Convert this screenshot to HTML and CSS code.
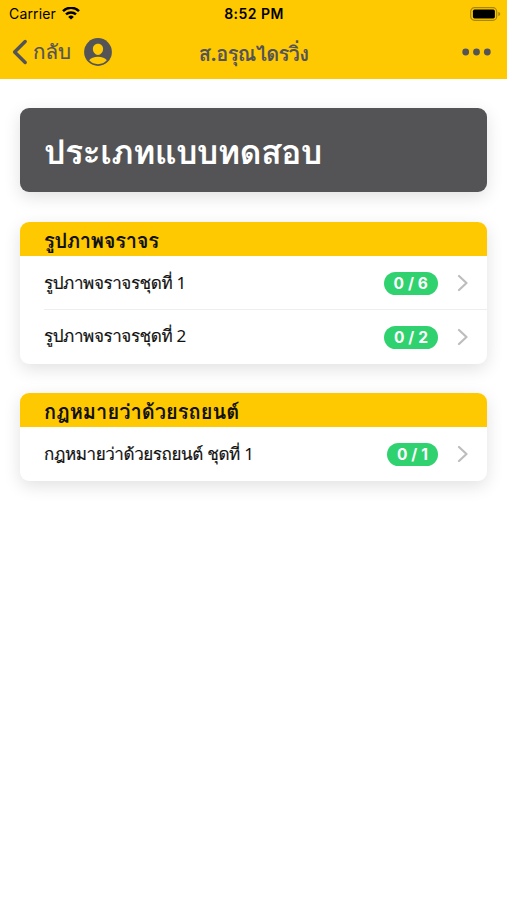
FILE: index.html
```html
<!DOCTYPE html>
<html lang="th">
<head>
<meta charset="utf-8">
<title>ส.อรุณไดรวิ่ง</title>
<link rel="stylesheet" href="styles.css">
</head>
<body>
<header class="top">
  <div class="status">
    <div class="carrier"><span>Carrier</span>
      <svg width="18" height="14" viewBox="0 0 18 14" fill="none" stroke="#000" stroke-width="2.5"><path d="M1 4.100a11.400 11.400 0 0 1 16 0M4 7.400a7.200 7.200 0 0 1 10 0"/><path d="M9 12.600L6.200 9.900a4 4 0 0 1 5.600 0z" fill="#000" stroke="none"/></svg>
    </div>
    <span class="time">8:52 PM</span>
    <svg class="battery" width="31" height="14" viewBox="0 0 31 14"><rect x=".7" y=".7" width="26" height="12.6" rx="3.8" fill="none" stroke="#a88608" stroke-width="1.2"/><rect x="2.9" y="2.600" width="22" height="8.800" rx="1.600" fill="#000"/><path d="M28.300 4.800q2 .8 2 2.200t-2 2.200z" fill="#a88608"/></svg>
  </div>
  <nav class="nav">
    <div class="left">
      <svg width="16" height="28" viewBox="0 0 16 28" fill="none" stroke="#545456" stroke-width="3.4" stroke-linecap="round" stroke-linejoin="round"><path d="M13.200 3.500L2.600 14l10.600 10.500"/></svg>
      <span class="back">กลับ</span>
      <svg class="user" width="28" height="28" viewBox="0 0 28 28"><circle cx="14" cy="14" r="13.9" fill="#545456"/><path d="M14 5.800c3 0 5.100 2.200 5.100 5.100S16.800 16.900 14 16.900 8.900 13.800 8.900 10.900 11 5.800 14 5.800zM5.200 22.300c1.400-2.300 5-3.500 8.800-3.500s7.400 1.200 8.800 3.500a12 12 0 0 1-17.600 0z" fill="#ffc902"/></svg>
    </div>
    <h1 class="nav-title">ส.อรุณไดรวิ่ง</h1>
    <svg class="more" width="29" height="8" viewBox="0 0 29 8" fill="#545456"><circle cx="3.700" cy="4" r="3.400"/><circle cx="14.500" cy="4" r="3.400"/><circle cx="25.300" cy="4" r="3.400"/></svg>
  </nav>
</header>
<main class="content">
  <section class="card banner"><h2>ประเภทแบบทดสอบ</h2></section>
  <section class="card">
    <h3 class="head">รูปภาพจราจร</h3>
    <div class="row divided"><span class="label">รูปภาพจราจรชุดที่ <span class="digit">1</span></span><span class="badge">0 / 6</span><svg class="chevron" width="11" height="18" viewBox="0 0 11 18"><path d="M2 2l7.500 7-7.500 7"/></svg></div>
    <div class="row last"><span class="label">รูปภาพจราจรชุดที่ <span class="digit">2</span></span><span class="badge">0 / 2</span><svg class="chevron" width="11" height="18" viewBox="0 0 11 18"><path d="M2 2l7.500 7-7.500 7"/></svg></div>
  </section>
  <section class="card">
    <h3 class="head long">กฎหมายว่าด้วยรถยนต์</h3>
    <div class="row"><span class="label">กฎหมายว่าด้วยรถยนต์ ชุดที่ <span class="digit">1</span></span><span class="badge">0 / 1</span><svg class="chevron" width="11" height="18" viewBox="0 0 11 18"><path d="M2 2l7.500 7-7.500 7"/></svg></div>
  </section>
</main>
</body>
</html>
```
FILE: styles.css
```css
* { box-sizing: border-box; }
body { margin: 0; background: #fff; color: #111; font-family: Inter, Loma, sans-serif; }
h1, h2, h3 { margin: 0; }
svg { display: block; flex: none; }
.top { height: 79px; background: #ffc902; }
.status { display: grid; grid-template-columns: 1fr auto 1fr; align-items: center; height: 27px; padding: 0 6px 0 9px; color: #000; }
.carrier { display: flex; align-items: center; gap: 6px; font-size: 14px; letter-spacing: .15px; }
.time { margin-right: 2px; font-size: 14px; font-weight: 600; letter-spacing: .45px; }
.battery { justify-self: end; }
.nav { display: grid; grid-template-columns: 1fr auto 1fr; align-items: center; height: 50px; padding: 0 16px 0 12px; color: #545456; }
.left { display: flex; align-items: center; }
.back { margin-left: 5px; font-size: 20.500px; line-height: 28px; -webkit-text-stroke: .2px; }
.user { margin-left: 13px; }
.nav-title { padding: 4px 0 0 4px; font-size: 20px; line-height: 28px; letter-spacing: -.65px; }
.more { justify-self: end; }
.content { display: flex; flex-direction: column; gap: 29px; padding: 29px 20px; }
.card { border-radius: 9px; background: #fff; box-shadow: 0 5px 17px rgba(0, 0, 0, .12); }
.banner { display: flex; align-items: center; height: 84px; margin-bottom: 1px; padding: 4px 25px 0 24px; background: #545456; color: #fff; }
.banner h2 { font-size: 34px; line-height: 48px; letter-spacing: -.65px; }
.head { height: 34px; padding: 2px 24px 0; border-radius: 9px 9px 0 0; background: #ffc902; color: #111; font-size: 20px; line-height: 34px; letter-spacing: -.25px; }
.long { letter-spacing: .05px; }
.row { position: relative; display: flex; align-items: center; height: 54px; padding: 0 19px 0 24px; }
.divided::after { content: ""; position: absolute; left: 24px; right: 0; bottom: 0; height: 1px; background: #eee; }
.label { flex: 1; padding-bottom: 2px; font-size: 17px; letter-spacing: -.4px; white-space: nowrap; -webkit-text-stroke: .2px; }
.last .label { padding-bottom: 3px; }
.digit { font-family: "Noto Sans", sans-serif; font-size: 17px; -webkit-text-stroke: 0; }
.badge { height: 23px; padding: 0 10px; border-radius: 12px; background: #2fd26e; color: #fff; font-size: 15.500px; font-weight: 700; line-height: 23px; letter-spacing: .1px; }
.chevron { margin-left: 19px; fill: none; stroke: #bdbdbf; stroke-width: 2.2; stroke-linecap: round; stroke-linejoin: round; }
```
